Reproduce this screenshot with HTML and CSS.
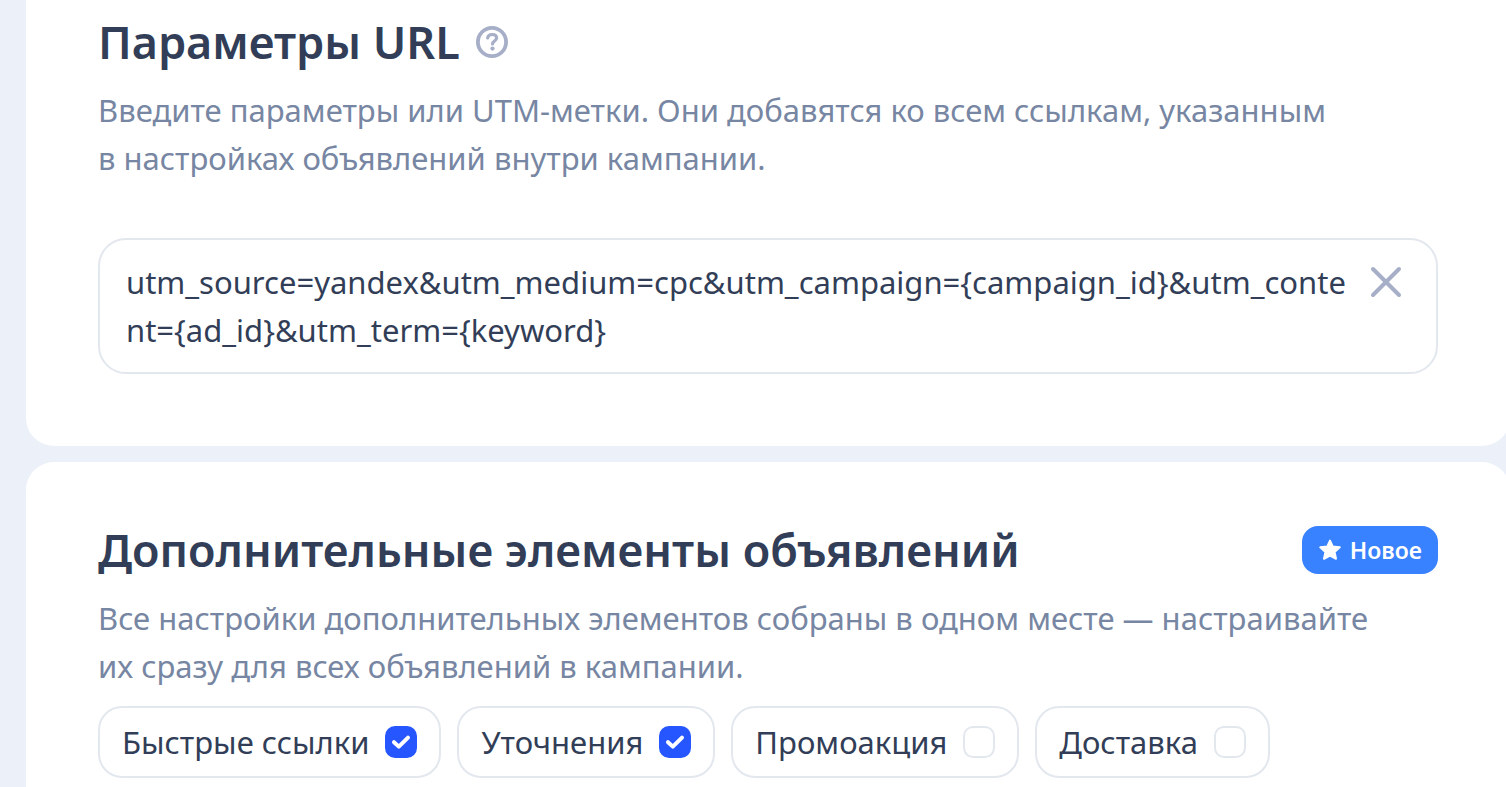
FILE: index.html
```html
<!DOCTYPE html>
<html lang="ru">
<head>
<meta charset="utf-8">
<title>Настройки кампании</title>
<link rel="stylesheet" href="styles.css">
</head>
<body>
<main class="page">
  <section class="card card-first">
    <div class="card-head">
      <h2 class="title">Параметры URL</h2>
      <button class="icon-button help" type="button" aria-label="Справка">
        <svg width="32" height="32" viewBox="0 0 32 32" fill="none" stroke="currentColor" stroke-linecap="round" stroke-linejoin="round">
          <circle cx="16" cy="16" r="14.1" stroke-width="3.8"/>
          <path d="M11.6 12C12 9.6 13.8 8.5 16.2 8.5C18.8 8.5 20.6 9.9 20.6 12.1C20.6 15.1 16.5 15 16.5 18" stroke-width="3.2"/>
          <circle cx="16.5" cy="22.6" r="2.1" fill="currentColor" stroke="none"/>
        </svg>
      </button>
    </div>
    <p class="hint" id="url-hint">Введите параметры или UTM-метки. Они добавятся ко всем ссылкам, указанным<br>в настройках объявлений внутри кампании.</p>
    <div class="field">
      <textarea class="field-input" rows="2" spellcheck="false" aria-label="Параметры URL" aria-describedby="url-hint">utm_source=yandex&amp;utm_medium=cpc&amp;utm_campaign={campaign_id}&amp;utm_conte
nt={ad_id}&amp;utm_term={keyword}</textarea>
      <button class="icon-button clear" type="button" aria-label="Очистить">
        <svg width="32" height="32" viewBox="0 0 32 32" fill="none" stroke="currentColor" stroke-width="4" stroke-linecap="round">
          <path d="M3 3L29 29M29 3L3 29"/>
        </svg>
      </button>
    </div>
  </section>

  <section class="card card-last">
    <div class="card-head">
      <h2 class="title">Дополнительные элементы объявлений</h2>
      <span class="badge">
        <svg width="24" height="24" viewBox="0 0 24 24" fill="currentColor" stroke="currentColor" stroke-width="2" stroke-linejoin="round">
          <path d="M12 2.6L14.7 8.5L21.8 9.3L16.6 13.9L18 20.8L12 17.7L6 20.8L7.4 13.9L2.2 9.3L9.3 8.5Z"/>
        </svg>
        Новое
      </span>
    </div>
    <p class="hint">Все настройки дополнительных элементов собраны в одном месте — настраивайте<br>их сразу для всех объявлений в кампании.</p>
    <div class="chips">
      <label class="chip">Быстрые ссылки<input class="check" type="checkbox" checked></label>
      <label class="chip">Уточнения<input class="check" type="checkbox" checked></label>
      <label class="chip">Промоакция<input class="check" type="checkbox"></label>
      <label class="chip">Доставка<input class="check" type="checkbox"></label>
    </div>
  </section>
</main>
</body>
</html>
```

FILE: styles.css
```css
* {
  box-sizing: border-box;
}

body {
  margin: 0;
  overflow-x: hidden;
  background: #ecf0f8;
  color: #323e57;
  font-family: "Noto Sans", "Open Sans", sans-serif;
  font-size: 31px;
  line-height: 48px;
}

.page {
  display: flex;
  flex-direction: column;
  gap: 16px;
  min-height: 100vh;
  margin: 0 -4px 0 26px;
}

.card {
  padding: 60px 72px 72px;
  border-radius: 28px;
  background: #fff;
}

.card-first {
  padding-top: 14px;
  border-radius: 0 0 28px 28px;
}

.card-last {
  flex: 1;
  padding-bottom: 8px;
  border-radius: 28px 28px 0 0;
}

.card-head {
  display: flex;
  align-items: center;
  gap: 16px;
}

.title {
  margin: 0;
  font-size: 45px;
  font-weight: 600;
  line-height: 56px;
  white-space: nowrap;
}

.icon-button {
  display: flex;
  flex: none;
  padding: 0;
  border: 0;
  background: none;
  color: #a6afc7;
  cursor: pointer;
}

.hint {
  margin: 16px 0;
  color: #7786a2;
  white-space: nowrap;
}

.field {
  display: flex;
  align-items: flex-start;
  margin-top: 56px;
  padding: 18px 34px 18px 26px;
  border: 2px solid #e3e7ee;
  border-radius: 28px;
}

.field-input {
  flex: 1;
  min-width: 0;
  height: 96px;
  padding: 0;
  border: 0;
  outline: 0;
  resize: none;
  overflow: hidden;
  background: none;
  color: inherit;
  font: inherit;
  white-space: pre;
}

.clear {
  margin-top: 8px;
}

.badge {
  display: flex;
  align-items: center;
  gap: 8px;
  margin-left: auto;
  padding: 0 16px;
  border-radius: 16px;
  background: #3881ff;
  color: #fff;
  font-size: 23px;
  font-weight: 600;
}

.chips {
  display: flex;
  gap: 16px;
}

.chip {
  display: flex;
  align-items: center;
  gap: 16px;
  padding: 10px 22px;
  border: 2px solid #e3e7ee;
  border-radius: 24px;
  white-space: nowrap;
  cursor: pointer;
}

.check {
  flex: none;
  width: 32px;
  height: 32px;
  margin: 0;
  border: 2px solid #e3e7ee;
  border-radius: 10px;
  appearance: none;
  background: #fff;
}

.check:checked {
  border-color: #2656ff;
  background: #2656ff url("data:image/svg+xml,%3Csvg xmlns='http://www.w3.org/2000/svg' viewBox='0 0 28 28' fill='none' stroke='white' stroke-width='4' stroke-linecap='round' stroke-linejoin='round'%3E%3Cpath d='M7 14.2L11.8 18.6L21 9.6'/%3E%3C/svg%3E") center / 28px 28px no-repeat;
}
```
